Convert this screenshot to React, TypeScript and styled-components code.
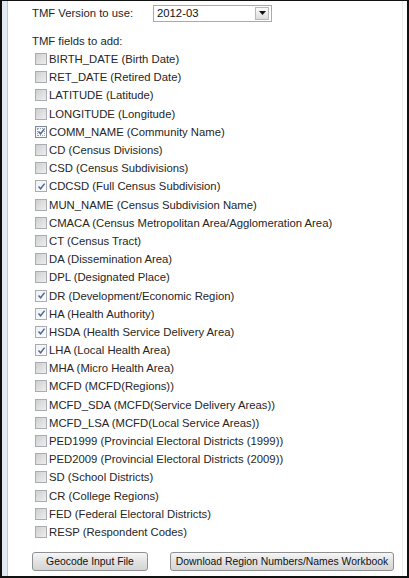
import React from "react";
import styled, { createGlobalStyle } from "styled-components";

const Global = createGlobalStyle`
  html, body { margin: 0; padding: 0; background: #fff; overflow: hidden; }
  * { box-sizing: border-box; }
`;

const Frame = styled.div`
  width: 409px;
  height: 578px;
  display: flex;
  border-style: solid;
  border-color: #111;
  border-width: 1px 2px 2px 2px;
  background: #fff;
  font-family: "Liberation Sans", Arial, sans-serif;
  font-size: 11.3px;
  color: #262626;
`;

const Rail = styled.div`
  width: 6px;
  background: #e3eaf2;
  border-right: 1px solid #c4c9cf;
`;

const Content = styled.div`
  flex: 1;
  display: flex;
  flex-direction: column;
  padding: 3px 0 0 24px;
  margin-right: 4px;
  border-right: 1px solid #ececec;
`;

const VersionRow = styled.div`
  display: flex;
  align-items: center;
  height: 18px;
`;

const Label = styled.span`
  width: 121px;
  line-height: 18px;
`;

const Select = styled.div`
  width: 119px;
  height: 17px;
  border: 1px solid #a6abb2;
  display: flex;
  align-items: center;
  justify-content: space-between;
  padding: 0 2px 0 3px;
  background: #fff;
  color: #111;
`;

const Arrow = styled.div`
  width: 14px;
  height: 13px;
  border: 1px solid #b5b9bf;
  background: linear-gradient(#fafafa, #dcdcdc);
  display: flex;
  align-items: center;
  justify-content: center;
`;

const SectionTitle = styled.div`
  margin-top: 10px;
  line-height: 18px;
`;

const List = styled.div`
  display: flex;
  flex-direction: column;
`;

const Row = styled.label`
  display: flex;
  align-items: center;
  height: 18.2px;
  padding-left: 3px;
  white-space: nowrap;
`;

const Box = styled.span<{ $checked: boolean; $focus?: boolean }>`
  width: 12px;
  height: 12px;
  margin-right: 2px;
  flex: none;
  border: 1px solid ${(p) => (p.$focus ? "#7f8a99" : "#a9adb2")};
  background: ${(p) =>
    p.$checked
      ? "linear-gradient(135deg, #f0f0f0, #fdfdfd)"
      : "linear-gradient(135deg, #cfcfcf, #eeeeee)"};
  display: flex;
  align-items: center;
  justify-content: center;
  ${(p) => (p.$focus ? "outline: 1px dotted #9aa3ad; outline-offset: -3px;" : "")}
`;

const ButtonRow = styled.div`
  display: flex;
  gap: 22px;
  margin-top: auto;
  margin-bottom: 5px;
`;

const Button = styled.button<{ $w: number }>`
  width: ${(p) => p.$w}px;
  height: 19px;
  padding: 0;
  white-space: nowrap;
  font-family: "Liberation Sans", Arial, sans-serif;
  font-size: 10.4px;
  color: #111;
  border: 1px solid #8f9092;
  border-radius: 3px;
  background: linear-gradient(#f6f6f6, #e2e2e2 50%, #d4d4d4);
`;

const fields: [string, boolean][] = [
  ["BIRTH_DATE (Birth Date)", false],
  ["RET_DATE (Retired Date)", false],
  ["LATITUDE (Latitude)", false],
  ["LONGITUDE (Longitude)", false],
  ["COMM_NAME (Community Name)", true],
  ["CD (Census Divisions)", false],
  ["CSD (Census Subdivisions)", false],
  ["CDCSD (Full Census Subdivision)", true],
  ["MUN_NAME (Census Subdivision Name)", false],
  ["CMACA (Census Metropolitan Area/Agglomeration Area)", false],
  ["CT (Census Tract)", false],
  ["DA (Dissemination Area)", false],
  ["DPL (Designated Place)", false],
  ["DR (Development/Economic Region)", true],
  ["HA (Health Authority)", true],
  ["HSDA (Health Service Delivery Area)", true],
  ["LHA (Local Health Area)", true],
  ["MHA (Micro Health Area)", false],
  ["MCFD (MCFD(Regions))", false],
  ["MCFD_SDA (MCFD(Service Delivery Areas))", false],
  ["MCFD_LSA (MCFD(Local Service Areas))", false],
  ["PED1999 (Provincial Electoral Districts (1999))", false],
  ["PED2009 (Provincial Electoral Districts (2009))", false],
  ["SD (School Districts)", false],
  ["CR (College Regions)", false],
  ["FED (Federal Electoral Districts)", false],
  ["RESP (Respondent Codes)", false],
];

const Check = () => (
  <svg width="9" height="9" viewBox="0 0 9 9">
    <path d="M1.5 4.5 L3.6 6.8 L7.6 1.6" fill="none" stroke="#4a6a9c" strokeWidth="1.5" />
  </svg>
);

export default function App() {
  return (
    <>
      <Global />
      <Frame>
        <Rail />
        <Content>
          <VersionRow>
            <Label>TMF Version to use:</Label>
            <Select>
              <span>2012-03</span>
              <Arrow>
                <svg width="7" height="4" viewBox="0 0 7 4">
                  <path d="M0 0 H7 L3.5 4 Z" fill="#111" />
                </svg>
              </Arrow>
            </Select>
          </VersionRow>
          <SectionTitle>TMF fields to add:</SectionTitle>
          <List>
            {fields.map(([name, checked], i) => (
              <Row key={name}>
                <Box $checked={checked} $focus={i === 4}>
                  {checked && <Check />}
                </Box>
                {name}
              </Row>
            ))}
          </List>
          <ButtonRow>
            <Button $w={116}>Geocode Input File</Button>
            <Button $w={224}>Download Region Numbers/Names Workbook</Button>
          </ButtonRow>
        </Content>
      </Frame>
    </>
  );
}
